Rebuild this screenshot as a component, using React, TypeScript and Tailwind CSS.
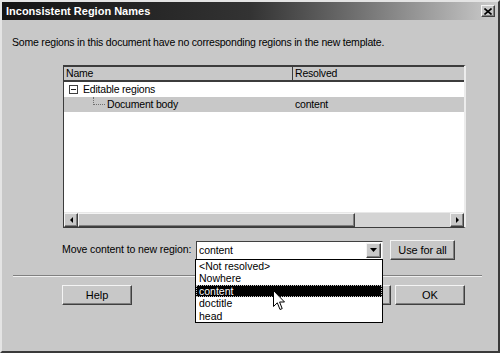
import React from "react";

const raised =
  "border border-t-[#f4f4f4] border-l-[#f4f4f4] border-r-[#404040] border-b-[#404040] shadow-[inset_-1px_-1px_0_#808080]";

function Btn({ label, w, className = "" }: { label: string; w: string; className?: string }) {
  return (
    <div
      className={`${w} h-[20px] flex items-center justify-center bg-[#c8c8c8] text-[11px] text-black ${raised} ${className}`}
    >
      {label}
    </div>
  );
}

export default function App() {
  const items = ["<Not resolved>", "Nowhere", "content", "doctitle", "head"];
  return (
    <div
      className="relative w-[500px] h-[353px] bg-[#c8c8c8] border-2 border-t-[#e4e4e4] border-l-[#e4e4e4] border-r-[#3a3a3a] border-b-[#3a3a3a] flex flex-col overflow-hidden text-black"
      style={{ fontFamily: '"Liberation Sans", Arial, sans-serif' }}
    >
      {/* title bar */}
      <div className="h-[18px] flex items-center justify-between bg-gradient-to-r from-[#151515] via-[#333333] to-[#cccccc]">
        <span className="ml-[4px] text-white font-bold text-[11px] leading-[18px]">
          Inconsistent Region Names
        </span>
        <div
          className={`mr-[3px] w-[14px] h-[12px] flex items-center justify-center bg-[#c8c8c8] ${raised}`}
        >
          <svg width="8" height="7" viewBox="0 0 8 7">
            <path d="M0.5 0.5 L7.5 6.5 M7.5 0.5 L0.5 6.5" stroke="#000" strokeWidth="1.6" />
          </svg>
        </div>
      </div>

      <p className="mt-[16px] ml-[10px] h-[13px] leading-[13px] text-[10.5px] tracking-[-0.2px]">
        Some regions in this document have no corresponding regions in the new template.
      </p>

      {/* list box */}
      <div className="mt-[16px] ml-[61px] w-[403px] h-[163px] flex flex-col border-l border-t border-b border-[#3c3c3c] border-r-2 border-r-[#ececec] bg-white text-[10.5px] tracking-[-0.2px]">
        <div className="h-[16px] flex bg-[#c8c8c8] border-t border-[#3c3c3c] border-b-2 border-b-[#3c3c3c]">
          <div className="w-[228px] pl-[2px] leading-[13px]">Name</div>
          <div className="flex-1 pl-[2px] leading-[13px] border-l border-[#3c3c3c]">Resolved</div>
        </div>
        <div className="h-[15px] flex items-center">
          <div className="ml-[5px] w-[9px] h-[9px] border border-[#404040] flex items-center justify-center">
            <div className="w-[5px] h-px bg-[#202020]" />
          </div>
          <span className="ml-[5px] leading-[15px]">Editable regions</span>
        </div>
        <div className="h-[15px] flex bg-[#c8c8c8]">
          <div className="w-[228px] flex items-center">
            <div className="relative ml-[29px] w-[13px] h-[15px]">
              <div className="absolute left-0 top-0 h-[8px] border-l border-dotted border-[#707070]" />
              <div className="absolute left-0 top-[7px] w-[12px] border-t border-dotted border-[#707070]" />
            </div>
            <span className="ml-[1px] leading-[15px]">Document body</span>
          </div>
          <div className="flex-1 pl-[3px] leading-[15px]">content</div>
        </div>
        <div className="flex-1" />
        {/* horizontal scrollbar */}
        <div className="h-[15px] flex bg-[#d4d4d4] border-t border-[#e8e8e8]">
          <div className={`w-[14px] h-[14px] flex items-center justify-center bg-[#c8c8c8] ${raised}`}>
            <svg width="3" height="6" viewBox="0 0 3 6">
              <path d="M3 0 L0 3 L3 6 Z" fill="#000" />
            </svg>
          </div>
          <div className={`w-[277px] h-[14px] bg-[#c8c8c8] ${raised}`} />
          <div className="flex-1" />
          <div className={`w-[14px] h-[14px] flex items-center justify-center bg-[#c8c8c8] ${raised}`}>
            <svg width="3" height="6" viewBox="0 0 3 6">
              <path d="M0 0 L3 3 L0 6 Z" fill="#000" />
            </svg>
          </div>
        </div>
      </div>

      {/* combo row */}
      <div className="mt-[12px] ml-[60px] h-[20px] flex items-center text-[10.5px] tracking-[-0.1px]">
        <div className="w-[134px]">Move content to new region:</div>
        <div className="w-[187px] h-[19px] flex items-center bg-white border border-t-[#404040] border-l-[#404040] border-r-[#e8e8e8] border-b-[#e8e8e8]">
          <span className="ml-[2px] flex-1 leading-[15px]">content</span>
          <div className={`mr-[1px] w-[15px] h-[15px] flex items-center justify-center bg-[#c8c8c8] ${raised}`}>
            <svg width="7" height="4" viewBox="0 0 7 4">
              <path d="M0 0 L7 0 L3.5 4 Z" fill="#000" />
            </svg>
          </div>
        </div>
        <Btn label="Use for all" w="w-[65px]" className="ml-[7px]" />
      </div>

      {/* separator */}
      <div className="mt-[15px] ml-[11px] w-[469px] h-[2px] border-t border-[#808080] border-b border-b-[#f0f0f0]" />

      {/* buttons */}
      <div className="mt-[8px] flex h-[20px]">
        <Btn label="Help" w="w-[70px]" className="ml-[60px]" />
        <Btn label="Cancel" w="w-[70px]" className="ml-[189px]" />
        <Btn label="OK" w="w-[70px]" className="ml-[4px]" />
      </div>

      {/* dropdown list overlay */}
      <div className="absolute left-[193px] top-[257px] w-[188px] h-[64px] bg-white border border-black text-[10.5px] flex flex-col">
        {items.map((it) => (
          <div
            key={it}
            className={
              it === "content"
                ? "h-[12.4px] leading-[10.4px] pl-[2px] bg-black text-white border border-dotted border-[#c0c0c0]"
                : "h-[12.4px] leading-[12.4px] pl-[3px]"
            }
          >
            {it}
          </div>
        ))}
      </div>

      {/* mouse cursor */}
      <svg
        className="absolute left-[271px] top-[288px]"
        width="13"
        height="21"
        viewBox="0 0 13 21"
      >
        <path
          d="M0.5 0.5 L0.5 16.5 L4.3 12.8 L7 19.5 L9.2 18.6 L6.6 12 L11.5 12 Z"
          fill="#fff"
          stroke="#000"
          strokeWidth="1"
          strokeLinejoin="miter"
        />
      </svg>
    </div>
  );
}
